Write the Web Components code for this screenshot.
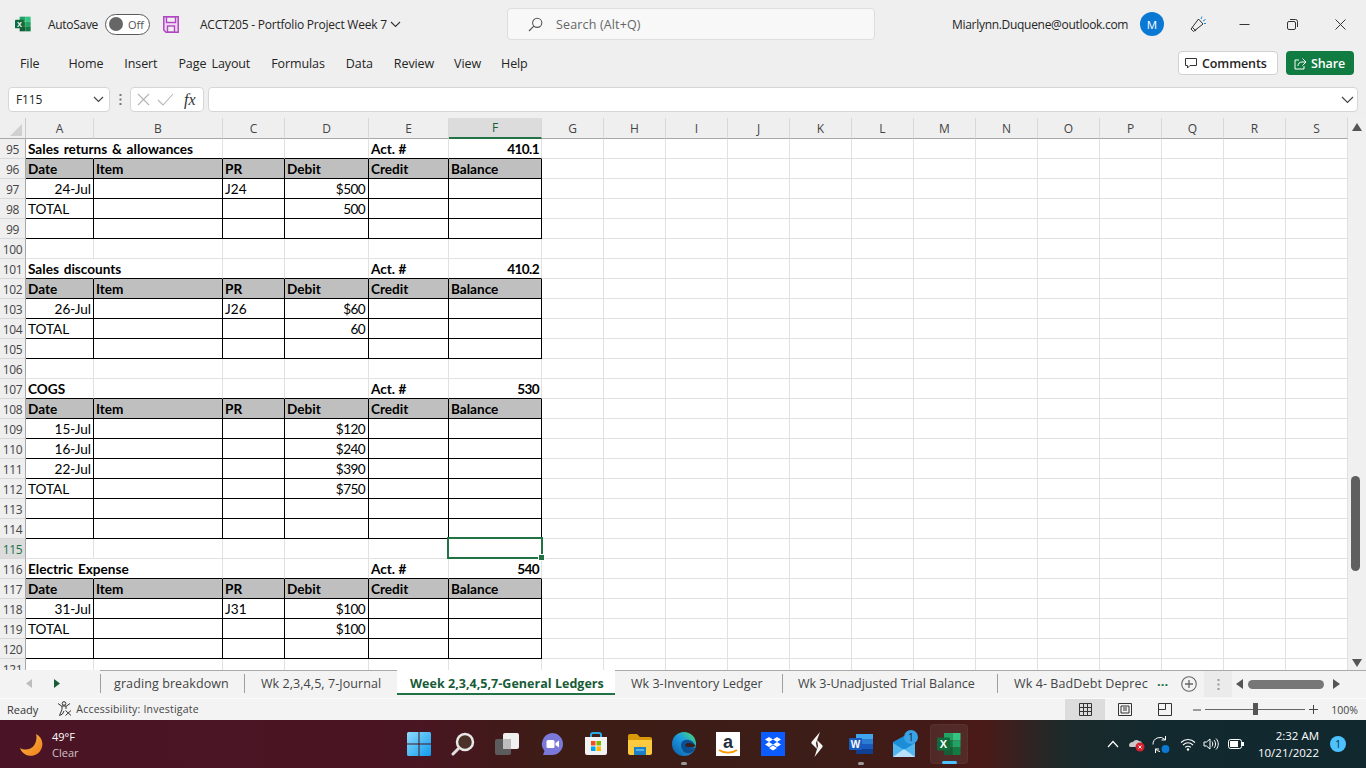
<!DOCTYPE html>
<html lang="en">
<head>
<meta charset="UTF-8">
<title>ACCT205 - Portfolio Project Week 7</title>
<style>
  html, body { margin: 0; height: 100%; }
  body {
    width: 1366px; height: 768px; overflow: hidden;
    display: flex; flex-direction: column;
    background: #efefef; color: #252525;
    font-family: "Open Sans", "Noto Sans", sans-serif; font-size: 12px;
  }
</style>
</head>
<body>
<xl-titlebar></xl-titlebar>
<xl-menubar></xl-menubar>
<xl-formula></xl-formula>
<xl-sheet></xl-sheet>
<xl-tabs></xl-tabs>
<xl-status></xl-status>
<win-taskbar></win-taskbar>

<script>
  const excelLogo = (s) => `<svg width="${s}" height="${s}" viewBox="0 0 24 24">
    <rect x="7" y="1" width="8.5" height="7.5" fill="#21a366"/><rect x="15.5" y="1" width="8" height="7.5" fill="#33c481"/>
    <rect x="7" y="8.5" width="8.5" height="7" fill="#107c41"/><rect x="15.5" y="8.5" width="8" height="7" fill="#21a366"/>
    <rect x="7" y="15.5" width="8.5" height="7.5" fill="#185c37"/><rect x="15.5" y="15.5" width="8" height="7.5" fill="#107c41"/>
    <rect x="0" y="5.5" width="13" height="13" rx="1" fill="#0f6b39"/>
    <text x="6.5" y="16" text-anchor="middle" font-family="Liberation Sans" font-weight="700" font-size="11" fill="#fff">X</text></svg>`;

  class Base extends HTMLElement {
    constructor() {
      super();
      this.attachShadow({ mode: "open" }).innerHTML = this.render();
    }
  }

  class XlTitlebar extends Base {
    render() {
      return `<style>
        :host { display: flex; align-items: center; height: 48px; flex: none; font-size: 12px; position: relative; }
        :host > * { flex: none; }
        .logo { margin-left: 15px; width: 16px; height: 16px; display: flex; }
        .auto { margin-left: 17px; width: 57px; letter-spacing: -.3px; }
        .toggle { width: 45px; height: 21px; box-sizing: border-box; border: 1.3px solid #5a5a5a; border-radius: 11px; background: #fff;
          display: flex; align-items: center; gap: 5px; padding-left: 3px; font-size: 11px; color: #555; }
        .toggle i { width: 14px; height: 14px; border-radius: 50%; background: #666; }
        .save { margin-left: 13px; display: flex; }
        .name { margin-left: 21px; width: 187px; white-space: nowrap; letter-spacing: -.22px; }
        .chev { margin-left: 3px; display: flex; }
        .search { margin-left: 106px; width: 368px; height: 32px; box-sizing: border-box; background: #f8f8f8; border: 1px solid #dedede; border-radius: 4px;
          display: flex; align-items: center; padding-left: 20px; gap: 13px; color: #666; font-size: 12.5px; letter-spacing: .15px; }
        .mail { margin-left: 77px; width: 177px; white-space: nowrap; letter-spacing: -.3px; }
        .av { margin-left: 11px; width: 24px; height: 24px; border-radius: 50%; background: #0b78d4; color: #fff; font-size: 11.5px; display: flex; align-items: center; justify-content: center; }
        .rest { margin-left: 25px; display: flex; align-items: center; }
        .win { width: 48px; display: flex; justify-content: center; }
      </style>
      <span class="logo">${excelLogo(16)}</span>
      <span class="auto">AutoSave</span>
      <span class="toggle"><i></i>Off</span>
      <span class="save"><svg width="16" height="17" viewBox="0 0 16 17"><path d="M.8.8h14.4v15.4H3L.8 14z" fill="#f0d8f3" stroke="#b146c2" stroke-width="1.5"/><rect x="3.5" y="1" width="9" height="5.5" fill="#efefef" stroke="#b146c2" stroke-width="1.4"/><rect x="4.5" y="10" width="7" height="6" fill="#efefef" stroke="#b146c2" stroke-width="1.4"/></svg></span>
      <span class="name">ACCT205 - Portfolio Project Week 7</span>
      <span class="chev"><svg width="11" height="7" viewBox="0 0 11 7"><path d="M1 1l4.5 4.5L10 1" fill="none" stroke="#333" stroke-width="1.1"/></svg></span>
      <div class="search"><svg width="15" height="15" viewBox="0 0 15 15"><circle cx="9.2" cy="5.8" r="4.6" fill="none" stroke="#555" stroke-width="1.1"/><path d="M5.8 9.2L1 14" stroke="#555" stroke-width="1.2"/></svg>Search (Alt+Q)</div>
      <span class="mail">Miarlynn.Duquene@outlook.com</span>
      <span class="av">M</span>
      <div class="rest">
        <svg width="18" height="18" viewBox="0 0 18 18" style="margin-right:13px"><path d="M9.5 4L2 14l2.5 2.5L14 9z M3.3 12.2l2.6 2.8M6 16l1.5-1.3" fill="none" stroke="#333" stroke-width="1"/><path d="M12 4l1-2.500M14 6l2.500-1.500M15 8.500h2" stroke="#1e88d8" stroke-width="1"/></svg>
        <span class="win"><svg width="11" height="11" viewBox="0 0 11 11"><path d="M.5 5.500h10" stroke="#333"/></svg></span>
        <span class="win"><svg width="11" height="11" viewBox="0 0 11 11"><rect x=".5" y="2.500" width="8" height="8" rx="1.500" fill="none" stroke="#333"/><path d="M3 .5h5.500a2 2 0 0 1 2 2V8" fill="none" stroke="#333"/></svg></span>
        <span class="win"><svg width="11" height="11" viewBox="0 0 11 11"><path d="M.5.5l10 10M10.500.5l-10 10" stroke="#333"/></svg></span>
      </div>`;
    }
  }

  class XlMenubar extends Base {
    render() {
      return `<style>
        :host { display: flex; align-items: center; height: 30px; flex: none; padding-left: 20px; padding-right: 12px; font-size: 12.5px; }
        span { margin-right: 21px; white-space: nowrap; letter-spacing: -.1px; }
        .first { margin-right: 29px; }
        .wide { word-spacing: 2px; }
        .tight { margin-right: 20px; }
        .btn { display: flex; align-items: center; height: 24px; box-sizing: border-box; border-radius: 4px; font-weight: 600; letter-spacing: -.1px; }
        .c { margin-left: auto; width: 100px; background: #fff; border: 1px solid #d1d1d1; padding-left: 6px; gap: 5px; color: #242424; }
        .s { margin-left: 8px; width: 68px; background: #107c41; color: #fff; padding-left: 8px; gap: 4px; }
      </style>
      <span class="first">File</span><span>Home</span><span>Insert</span><span class="wide">Page Layout</span><span>Formulas</span><span>Data</span><span class="tight">Review</span><span class="tight">View</span><span style="margin-right:0">Help</span>
      <div class="btn c"><svg width="12" height="12" viewBox="0 0 12 12"><path d="M.5 1.500h11v7H5L2.500 11V8.500h-2z" fill="none" stroke="#333"/></svg>Comments</div>
      <div class="btn s"><svg width="13" height="13" viewBox="0 0 13 13"><path d="M8.500 1.500L12 5 8.500 8.500M12 5H8C5.500 5 4 6.500 4 9M5 3H1v9h9V9" fill="none" stroke="#fff"/></svg>Share</div>`;
    }
  }

  class XlFormula extends Base {
    render() {
      return `<style>
        :host { display: flex; align-items: flex-start; height: 40px; flex: none; padding: 9px 8px 0; box-sizing: border-box; }
        .box { height: 25px; box-sizing: border-box; background: #fff; border: 1px solid #d6d6d6; border-radius: 4px; display: flex; align-items: center; }
        .nm { width: 102px; padding: 0 5px 0 7px; justify-content: space-between; letter-spacing: -.1px; }
        .dots { width: 20px; display: flex; justify-content: center; padding-top: 7px; }
        .fx { width: 74px; padding-left: 6px; gap: 7px; }
        .fx em { font-family: "Liberation Serif", serif; font-size: 16px; font-weight: 400; color: #333; margin-left: 3px; }
        .in { margin-left: 4px; flex: 1; justify-content: flex-end; padding-right: 3px; }
      </style>
      <div class="box nm">F115<svg width="11" height="7" viewBox="0 0 11 7"><path d="M1 1l4.500 4.500L10 1" fill="none" stroke="#444" stroke-width="1.200"/></svg></div>
      <div class="dots"><svg width="3" height="11" viewBox="0 0 3 11"><path d="M1.500 0v2M1.500 4.500v2M1.500 9v2" stroke="#777" stroke-width="2"/></svg></div>
      <div class="box fx"><svg width="13" height="13" viewBox="0 0 13 13"><path d="M1 1l11 11M12 1L1 12" stroke="#b5b5b5" stroke-width="1.100"/></svg><svg width="17" height="13" viewBox="0 0 17 13"><path d="M1 7l5 5L16 1" fill="none" stroke="#b5b5b5" stroke-width="1.100"/></svg><em><i>fx</i></em></div>
      <div class="box in"><svg width="13" height="8" viewBox="0 0 13 8"><path d="M1 1l5.500 5.500L12 1" fill="none" stroke="#444" stroke-width="1.200"/></svg></div>`;
    }
  }

  // rows of the ledger: kind + the cells in columns A..F
  const LEDGER = [
    ["title", 95, "Sales returns & allowances", "410.1"],
    ["head", 96], ["data", 97, "24-Jul", "J24", "$500"], ["data", 98, "TOTAL", "", "500"], ["data", 99], ["gap", 100],
    ["title", 101, "Sales discounts", "410.2"],
    ["head", 102], ["data", 103, "26-Jul", "J26", "$60"], ["data", 104, "TOTAL", "", "60"], ["data", 105], ["gap", 106],
    ["title", 107, "COGS", "530"],
    ["head", 108], ["data", 109, "15-Jul", "", "$120"], ["data", 110, "16-Jul", "", "$240"], ["data", 111, "22-Jul", "", "$390"],
    ["data", 112, "TOTAL", "", "$750"], ["data", 113], ["data", 114], ["gap", 115],
    ["title", 116, "Electric Expense", "540"],
    ["head", 117], ["data", 118, "31-Jul", "J31", "$100"], ["data", 119, "TOTAL", "", "$100"], ["data", 120], ["gap", 121]
  ];
  const HEADS = ["Date", "Item", "PR", "Debit", "Credit", "Balance"];
  const COLS = "ABCDEFGHIJKLMNOPQRS".split("");
  const WIDTHS = [68, 129, 62, 84, 80, 93].concat(new Array(13).fill(62));

  class XlSheet extends Base {
    render() {
      let h = `<div class="corner"><svg width="12" height="12" viewBox="0 0 12 12"><path d="M12 0v12H0z" fill="#d0d0d0"/></svg></div>`;
      COLS.forEach((c) => { h += `<div class="ch${c === "F" ? " on" : ""}">${c}</div>`; });
      for (const r of LEDGER) {
        const [kind, n] = r;
        h += `<div class="rh${n === 115 ? " on" : ""}">${n}</div>`;
        for (let i = 0; i < 19; i++) {
          let cls = "c", txt = "";
          if (i < 6) {
            if (kind === "title") {
              cls += " b bb";
              if (i === 0) txt = r[2];
              if (i === 4) txt = "Act. #";
              if (i === 5) { txt = r[3]; cls += " r num"; }
              // the title runs over into column B, so the line between them goes
              if (i === 0 && r[2].length > 8) cls += " over";
            } else if (kind === "head") {
              cls += " b bb br hd"; txt = HEADS[i];
            } else if (kind === "data") {
              cls += " bb br";
              if (i === 0) { txt = r[2] || ""; if (txt !== "TOTAL") cls += " r"; }
              if (i === 2) txt = r[3] || "";
              if (i === 3) { txt = r[4] || ""; cls += " r num"; }
            }
          }
          h += `<div class="${cls}">${txt}</div>`;
        }
      }
      return `<style>
        :host { display: flex; height: 552px; flex: none; position: relative; overflow: hidden; background: #fff; }
        .grid { display: grid; grid-template-columns: 26px ${WIDTHS.map((w) => w + "px").join(" ")}; grid-auto-rows: 20px; grid-template-rows: 21px; align-content: start; width: 1348px; flex: none; }
        .corner, .ch, .rh { background: #efefef; color: #444; display: flex; align-items: center; justify-content: center; box-sizing: border-box; font-size: 12px; }
        .corner { border-right: 1px solid #c8c8c8; border-bottom: 1px solid #a8a8a8; justify-content: flex-end; align-items: flex-end; padding: 0 3px 2px 0; }
        .ch { border-right: 1px solid #d8d8d8; border-bottom: 1px solid #a8a8a8; }
        .ch.on { background: #dcdcdc; color: #185c37; border-bottom: 2px solid #217346; }
        .rh { border-right: 1px solid #a8a8a8; border-bottom: 1px solid #d8d8d8; padding-top: 1px; letter-spacing: -.3px; }
        .rh.on { background: #dcdcdc; color: #217346; }
        .c { box-sizing: border-box; border-right: 1px solid #e1e1e1; border-bottom: 1px solid #e1e1e1; padding: 1px 1px 0 2px; white-space: nowrap; line-height: 19px;
          font-family: Lato, "Liberation Sans", sans-serif; font-size: 13.6px; color: #000; }
        .b { font-weight: 700; }
        .r { text-align: right; padding-right: 2px; }
        .num { letter-spacing: -.6px; }
        .br.num { padding-right: 3px; }
        .bb { border-bottom-color: #000; }
        .br { border-right-color: #000; }
        .hd { background: #bfbfbf; }
        .over { border-right-color: transparent; overflow: visible; word-spacing: 1.5px; }
        .sel { position: absolute; left: 447px; top: 419px; width: 96px; height: 22px; box-sizing: border-box; border: 2px solid #217346; }
        .sel i { position: absolute; right: -4px; bottom: -4px; width: 5px; height: 5px; background: #217346; border: 1px solid #fff; }
        .bar { flex: 1; background: #f0f0f0; position: relative; display: flex; flex-direction: column; align-items: center; justify-content: space-between; padding: 5px 0 3px; }
        .thumb { position: absolute; left: 3px; top: 358px; width: 9px; height: 95px; border-radius: 5px; background: #5f5f5f; }
      </style>
      <div class="grid">${h}</div>
      <div class="sel"><i></i></div>
      <div class="bar">
        <svg width="10" height="8" viewBox="0 0 10 8"><path d="M5 0l5 8H0z" fill="#555"/></svg>
        <div class="thumb"></div>
        <svg width="10" height="8" viewBox="0 0 10 8"><path d="M5 8L0 0h10z" fill="#555"/></svg>
      </div>`;
    }
  }

  class SheetTab extends Base {
    render() {
      return `<style>
        :host { display: flex; align-items: center; box-sizing: border-box; height: 24px; white-space: nowrap; color: #444; font-size: 12.5px; letter-spacing: var(--ls, .1px); padding: 0 var(--p, 16px); position: relative; }
        :host([sep])::before { content: ""; position: absolute; left: 0; top: 3px; bottom: 2px; width: 1px; background: #9e9e9e; }
        :host([active]) { background: #fff; color: #185c37; font-weight: 700; letter-spacing: .03px; border-bottom: 2px solid #217346; margin-top: -1px; height: 25px; padding-top: 3px; }
      </style><slot></slot>`;
    }
  }

  class XlTabs extends Base {
    render() {
      return `<style>
        :host { display: flex; height: 28px; flex: none; box-sizing: border-box; background: #f3f3f3; position: relative; }
        .nav { width: 100px; display: flex; align-items: center; padding-left: 26px; gap: 22px; flex: none; box-sizing: border-box; height: 26px; }
        .strip { display: flex; flex: none; width: 1089px; border-top: 1px solid #a9a9a9; box-sizing: border-box; height: 27px; align-items: flex-start; }
        .more { margin-left: 4px; color: #217346; font-weight: 700; font-size: 13px; line-height: 20px; letter-spacing: 0; }
        .tools { display: flex; align-items: center; flex: 1; height: 27px; box-sizing: border-box; border-top: 1px solid #a9a9a9; }
        .dots { margin-left: 7px; height: 26px; width: 28px; background: #ebebeb; display: flex; align-items: center; justify-content: center; }
        .sb { flex: 1; display: flex; align-items: center; padding-left: 4px; gap: 4px; }
        .sb i { width: 76px; height: 9px; border-radius: 5px; background: #777; margin-left: 1px; margin-right: 5px; }
      </style>
      <div class="nav"><svg width="6" height="9" viewBox="0 0 6 9"><path d="M6 0v9L0 4.500z" fill="#bdbdbd"/></svg><svg width="6" height="9" viewBox="0 0 6 9"><path d="M0 0v9l6-4.500z" fill="#185c37"/></svg></div>
      <div class="strip">
        <sheet-tab sep style="--p:14px;width:144px">grading breakdown</sheet-tab>
        <sheet-tab sep style="--p:17px;width:153px;--ls:.07px">Wk 2,3,4,5, 7-Journal</sheet-tab>
        <sheet-tab active style="--p:13px;width:218px">Week 2,3,4,5,7-General Ledgers</sheet-tab>
        <sheet-tab style="--p:16px;width:167px;--ls:.02px">Wk 3-Inventory Ledger</sheet-tab>
        <sheet-tab sep style="--p:16px;width:215px;--ls:-.02px">Wk 3-Unadjusted Trial Balance</sheet-tab>
        <sheet-tab sep style="--p:17px;width:156px">Wk 4- BadDebt Deprec</sheet-tab>
        <span class="more">...</span>
      </div>
      <div class="tools">
        <svg width="16" height="16" viewBox="0 0 16 16" style="margin-left:-8px;flex:none"><circle cx="8" cy="8" r="7.300" fill="none" stroke="#666" stroke-width="1.100"/><path d="M8 4v8M4 8h8" stroke="#666" stroke-width="1.300"/></svg>
        <div class="dots"><svg width="3" height="11" viewBox="0 0 3 11"><path d="M1.500 0v2M1.500 4.500v2M1.500 9v2" stroke="#999" stroke-width="2"/></svg></div>
        <div class="sb"><svg width="7" height="10" viewBox="0 0 7 10"><path d="M7 0v10L0 5z" fill="#555"/></svg><i></i><svg width="7" height="10" viewBox="0 0 7 10"><path d="M0 0v10l7-5z" fill="#555"/></svg></div>
      </div>`;
    }
  }

  class XlStatus extends Base {
    render() {
      return `<style>
        :host { display: flex; align-items: center; height: 22px; flex: none; box-sizing: border-box; background: #f3f3f3; font-size: 11px; color: #333; padding-left: 7px; border-top: 1px solid #fbfbfb; }
        .a { margin-left: 19px; display: flex; align-items: center; gap: 4px; color: #444; font-size: 10.5px; letter-spacing: .2px; margin-top: -2px; }
        .views { margin-left: auto; display: flex; height: 100%; }
        .views span { width: 40px; display: flex; align-items: center; justify-content: center; }
        .views .on { background: #dcdcdc; }
        .zoom { display: flex; align-items: center; margin-left: 8px; margin-right: 8px; }
        .track { width: 100px; height: 1px; background: #666; margin: 0 4px; position: relative; }
        .track::after { content: ""; position: absolute; left: 48px; top: -6px; width: 5px; height: 12px; background: #555; }
        .pc { margin-left: 13px; font-size: 10.5px; color: #444; }
      </style>
      <span>Ready</span>
      <span class="a"><svg width="15" height="15" viewBox="0 0 15 15"><g fill="none" stroke="#333" stroke-width="1"><circle cx="7" cy="2.500" r="1.800"/><path d="M1 2.500l3.500 2.500h5l3.500-2.500M5 5v3.500L2.500 14.500l3-1.500 1.500-3M9 5v3"/><path d="M8.500 9.500l5.500 5M14 9.500l-5.500 5"/></g></svg>Accessibility: Investigate</span>
      <div class="views">
        <span class="on"><svg width="13" height="13" viewBox="0 0 13 13"><path d="M.5.5h12v12H.5zM4.500.5v12M8.500.5v12M.5 4.500h12M.5 8.500h12" fill="none" stroke="#333"/></svg></span>
        <span><svg width="14" height="13" viewBox="0 0 14 13"><path d="M.5.5h13v12H.5z M3 3h8v7H3z M5 5h4M5 7h4" fill="none" stroke="#333"/></svg></span>
        <span><svg width="14" height="13" viewBox="0 0 14 13"><path d="M.5.5h13v12H.5zM7.500.5v6H.5" fill="none" stroke="#333"/></svg></span>
      </div>
      <div class="zoom">
        <svg width="8" height="8" viewBox="0 0 8 8"><path d="M0 4h8" stroke="#444"/></svg>
        <div class="track"></div>
        <svg width="9" height="9" viewBox="0 0 9 9"><path d="M0 4.500h9M4.500 0v9" stroke="#444"/></svg>
        <span class="pc">100%</span>
      </div>`;
    }
  }

  class TaskIcon extends Base {
    render() {
      return `<style>
        :host { display: flex; align-items: center; justify-content: center; width: 44.200px; height: 48px; flex: none; position: relative; }
        :host([running])::after { content: ""; position: absolute; left: 19px; bottom: 3px; width: 6px; height: 3px; border-radius: 2px; background: #9a9a9a; }
        :host([active])::before { content: ""; position: absolute; left: 3px; right: 3px; top: 4px; bottom: 4px; border-radius: 4px; background: rgba(255,255,255,.07); box-shadow: inset 0 0 0 1px rgba(255,255,255,.04); }
        :host([active])::after { content: ""; position: absolute; left: 15px; width: 15px; bottom: 4px; height: 3px; border-radius: 2px; background: #4cc2ff; }
        ::slotted(svg) { position: relative; }
      </style><slot></slot>`;
    }
  }

  class WinTaskbar extends Base {
    render() {
      return `<style>
        :host { display: flex; align-items: center; height: 48px; flex: none;
          background: linear-gradient(90deg, #4b1426 0%, #4a1522 30%, #3d1c16 40%, #3d1d17 60%, #431a17 68%, #4a1a18 72%, #1c2a2b 78%, #12292f 85%, #12282f 100%);
          color: #fff; }
        .wx { width: 397px; flex: none; display: flex; align-items: center; padding: 1px 0 0 20px; box-sizing: border-box; gap: 8px; font-size: 11px; line-height: 16px; }
        .wx small { display: block; font-size: 11px; color: #cfc3c7; }
        .apps { display: flex; flex: none; }
        .tray { margin-left: auto; display: flex; align-items: center; padding-right: 20px; }
        .tray svg { flex: none; }
        .clock { text-align: right; font-size: 11.500px; line-height: 17px; margin-left: 14px; color: #fff; }
        .bell { width: 16px; height: 16px; border-radius: 50%; background: #4cc2ff; color: #10282f; font-size: 10px; display: flex; align-items: center; justify-content: center; margin-left: 11px; }
      </style>
      <div class="wx">
        <svg width="24" height="24" viewBox="0 0 24 24"><defs><linearGradient id="moon" x1="0" y1="0" x2="1" y2="1"><stop offset="0" stop-color="#fbb845"/><stop offset="1" stop-color="#f0801a"/></linearGradient></defs><path d="M16 1a11.500 11.500 0 1 1-16 14c5 3 11 1.500 14-2.500 2.500-3.500 3-8 2-11.500z" fill="url(#moon)"/></svg>
        <div>49°F<small>Clear</small></div>
      </div>
      <div class="apps">
        <task-icon><svg width="24" height="24" viewBox="0 0 24 24"><defs><linearGradient id="st" x1="0" y1="0" x2="1" y2="1"><stop offset="0" stop-color="#8fdcfb"/><stop offset="1" stop-color="#0f9aee"/></linearGradient></defs><path d="M1.500 0H11.500v11.500H0V1.500A1.500 1.500 0 0 1 1.500 0zM12.500 0H22.500A1.500 1.500 0 0 1 24 1.500V11.500H12.500zM0 12.500H11.500V24H1.500A1.500 1.500 0 0 1 0 22.500zM12.500 12.500H24V22.500A1.500 1.500 0 0 1 22.500 24H12.500z" fill="url(#st)"/></svg></task-icon>
        <task-icon><svg width="24" height="24" viewBox="0 0 24 24"><circle cx="14" cy="10" r="8" fill="#4a3228" stroke="#e8e8e8" stroke-width="2.500"/><path d="M8 16l-6 6" stroke="#e0e0e0" stroke-width="3" stroke-linecap="round"/></svg></task-icon>
        <task-icon><svg width="24" height="24" viewBox="0 0 24 24"><rect x="8" y="1" width="16" height="16" rx="2" fill="#f0f0f0"/><rect x="0" y="7" width="16" height="16" rx="2" fill="#5c5c5c"/><rect x="8" y="7" width="8" height="10" fill="#bdbdbd"/></svg></task-icon>
        <task-icon><svg width="24" height="24" viewBox="0 0 24 24"><path d="M12 1a11 11 0 0 1 0 22H3l1.500-4A11 11 0 0 1 12 1z" fill="#7a78d8"/><rect x="6.500" y="8" width="8" height="8" rx="1.500" fill="#fff"/><path d="M15.500 11l3.500-2.500v7L15.500 13z" fill="#fff"/></svg></task-icon>
        <task-icon><svg width="24" height="24" viewBox="0 0 24 24"><path d="M7 6V3a2 2 0 0 1 2-2h6a2 2 0 0 1 2 2v3" fill="none" stroke="#27a9e6" stroke-width="2"/><path d="M1 5h22v16a2 2 0 0 1-2 2H3a2 2 0 0 1-2-2z" fill="#f2f2f2"/><rect x="7" y="9" width="4.500" height="4.500" fill="#f25022"/><rect x="12.500" y="9" width="4.500" height="4.500" fill="#7fba00"/><rect x="7" y="14.500" width="4.500" height="4.500" fill="#00a4ef"/><rect x="12.500" y="14.500" width="4.500" height="4.500" fill="#ffb900"/></svg></task-icon>
        <task-icon><svg width="24" height="24" viewBox="0 0 24 24"><path d="M0 4a2 2 0 0 1 2-2h7l3 3h10a2 2 0 0 1 2 2v14H0z" fill="#d99a0a"/><path d="M0 8h24v13a2 2 0 0 1-2 2H2a2 2 0 0 1-2-2z" fill="#fcc93f"/><rect x="6" y="15" width="12" height="8" fill="#1f7fc4"/><rect x="8" y="17" width="8" height="2" fill="#4fb4ec"/></svg></task-icon>
        <task-icon running><svg width="24" height="24" viewBox="0 0 24 24"><defs><linearGradient id="ed" x1="0" y1="1" x2="1" y2="0"><stop offset="0" stop-color="#0c59a4"/><stop offset=".55" stop-color="#1b9de2"/><stop offset=".85" stop-color="#3ecb8f"/><stop offset="1" stop-color="#6fdc5c"/></linearGradient></defs><circle cx="12" cy="12" r="12" fill="url(#ed)"/><path d="M10 17C22 18 23 14 23 14 22 9 17 7 13 8 9 9 8 13 10 17z" fill="#0d4f94"/><path d="M23.500 14C21 11 17 10.500 14.500 11.500 12.500 12.500 13 14.500 15 14.800 18 15 21 15 23.500 14z" fill="#3d1d17"/><path d="M10 16.500c1 5 7 6.500 11 3 1-1 1.800-2.200 2.200-4-3 1.500-8 1.500-10-1z" fill="#0b4f90"/></svg></task-icon>
        <task-icon><svg width="24" height="24" viewBox="0 0 24 24"><rect width="24" height="24" fill="#fff"/><text x="12" y="16" text-anchor="middle" font-family="Liberation Sans" font-weight="700" font-size="18" fill="#232f3e">a</text><path d="M3 18c5 3.500 13 3.500 18 0" fill="none" stroke="#f90" stroke-width="1.800"/></svg></task-icon>
        <task-icon><svg width="24" height="24" viewBox="0 0 24 24"><rect width="24" height="24" fill="#0b5cff"/><path d="M8 5l4 2.500L8 10 4 7.500zM16 5l4 2.500-4 2.500-4-2.500zM8 10l4 2.500L8 15l-4-2.500zM16 10l4 2.500-4 2.500-4-2.500zM8 16l4-2.500 4 2.500-4 2.500z" fill="#fff"/></svg></task-icon>
        <task-icon><svg width="12" height="25" viewBox="0 0 12 25"><path d="M9 0L.5 10C0 11.500 1 12 2 13l4 4-1-6zM3.500 25l8-10c.5-1.500-.5-2-1.500-3L6 8l1 6z" fill="#f6f6f6"/></svg></task-icon>
        <task-icon running><svg width="24" height="24" viewBox="0 0 24 24"><rect x="7" y="2" width="17" height="20" rx="1" fill="#2b7cd3"/><rect x="7" y="2" width="17" height="5" fill="#41a5ee"/><rect x="7" y="12" width="17" height="5" fill="#185abd"/><rect x="7" y="17" width="17" height="5" fill="#103f91"/><rect x="0" y="6" width="13" height="12" rx="1" fill="#185abd"/><text x="6.500" y="16" text-anchor="middle" font-family="Liberation Sans" font-weight="700" font-size="10" fill="#fff">W</text></svg></task-icon>
        <task-icon><svg width="26" height="28" viewBox="0 0 26 28"><path d="M1 12l11-6 11 6v15H1z" fill="#1c8ed8"/><path d="M1 13l11 7 11-7v14H1z" fill="#53b7ef"/><path d="M1 27l11-8 11 8z" fill="#b9e2f9"/><circle cx="19" cy="7" r="7" fill="#3aa3e8"/><text x="19" y="11" text-anchor="middle" font-family="Open Sans" font-size="11" fill="#10304a">1</text></svg></task-icon>
        <task-icon active>${excelLogo(24)}</task-icon>
      </div>
      <div class="tray">
        <svg width="12" height="8" viewBox="0 0 12 8"><path d="M1 7l5-5.500L11 7" fill="none" stroke="#fff" stroke-width="1.200"/></svg>
        <svg width="17" height="15" viewBox="0 0 17 15" style="margin-left:9px"><path d="M1 9a4 4 0 0 1 4-4c1-2 4-3 6-1 2 0 3 1 3 3H14v3H3a2 2 0 0 1-2-1z" fill="#c9c9c9"/><circle cx="12" cy="10" r="4.500" fill="#d9202c"/><path d="M10.500 8.500l3 3M13.500 8.500l-3 3" stroke="#fff"/></svg>
        <svg width="18" height="19" viewBox="0 0 18 19" style="margin-left:7px"><path d="M1 9.500a7 7 0 0 1 12-5M13.500 1v4h-4M3.500 18v-4H7M3.500 14A7 7 0 0 0 8 16.500" fill="none" stroke="#fff"/><circle cx="13.500" cy="14" r="3.900" fill="#0b78d4"/></svg>
        <svg width="16" height="13" viewBox="0 0 16 13" style="margin-left:10px"><path d="M1 4.500c4-4 10-4 14 0M3 7c3-2.700 7-2.700 10 0M5.200 9.300c1.500-1.300 4.100-1.300 5.600 0" fill="none" stroke="#fff" stroke-width="1.100"/><circle cx="8" cy="11.500" r="1.200" fill="#fff"/></svg>
        <svg width="16" height="14" viewBox="0 0 16 14" style="margin-left:7px"><path d="M1 5h2.500L7 2v10L3.500 9H1z" fill="none" stroke="#fff"/><path d="M9 4.500c1 1.500 1 3.500 0 5M11 3c2 2.200 2 5.800 0 8M13 1.500c3 3 3 8 0 11" fill="none" stroke="#fff"/></svg>
        <svg width="16" height="10" viewBox="0 0 16 10" style="margin-left:9px"><rect x=".5" y=".5" width="13" height="9" rx="2" fill="none" stroke="#fff"/><rect x="2" y="2" width="8" height="6" fill="#fff"/><rect x="14" y="3" width="2" height="4" fill="#fff"/></svg>
        <div class="clock">2:32 AM<br>10/21/2022</div>
        <div class="bell">1</div>
      </div>`;
    }
  }

  customElements.define("task-icon", TaskIcon);
  customElements.define("sheet-tab", SheetTab);
  customElements.define("xl-titlebar", XlTitlebar);
  customElements.define("xl-menubar", XlMenubar);
  customElements.define("xl-formula", XlFormula);
  customElements.define("xl-sheet", XlSheet);
  customElements.define("xl-tabs", XlTabs);
  customElements.define("xl-status", XlStatus);
  customElements.define("win-taskbar", WinTaskbar);
</script>
</body>
</html>
